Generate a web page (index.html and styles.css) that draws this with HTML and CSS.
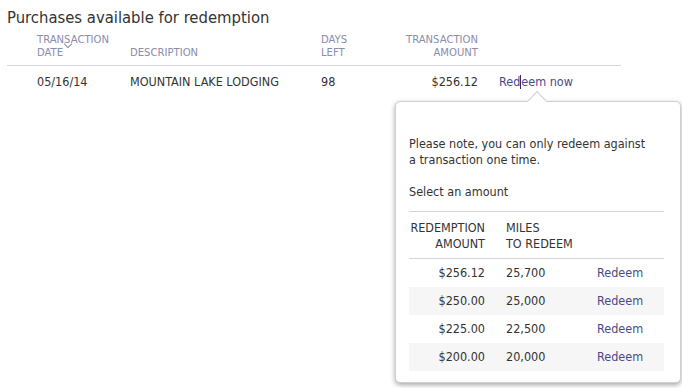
FILE: index.html
```html
<!DOCTYPE html>
<html lang="en">
<head>
  <meta charset="UTF-8" />
  <title>Purchases available for redemption</title>
  <link rel="stylesheet" href="styles.css">
</head>
<body>
  <div class="page">
    <h1>Purchases available for redemption</h1>

    <table class="purchases">
      <thead>
        <tr>
          <th class="col-date">TRANSACTION<br>DATE<span class="sort"></span></th>
          <th class="col-desc">DESCRIPTION</th>
          <th class="col-days">DAYS<br>LEFT</th>
          <th class="col-amount">TRANSACTION<br>AMOUNT</th>
          <th class="col-action"></th>
        </tr>
      </thead>
      <tbody>
        <tr>
          <td class="col-date">05/16/14</td>
          <td class="col-desc">MOUNTAIN LAKE LODGING</td>
          <td class="col-days">98</td>
          <td class="col-amount">$256.12</td>
          <td class="col-action"><a href="#">Red<span class="caret"></span>eem now</a></td>
        </tr>
      </tbody>
    </table>

    <div class="popover">
      <div class="arrow"></div>
      <p class="note">Please note, you can only redeem against a transaction one time.</p>
      <p class="select">Select an amount</p>

      <table class="amounts">
        <thead>
          <tr>
            <th class="amt">REDEMPTION<br>AMOUNT</th>
            <th class="miles">MILES<br>TO REDEEM</th>
            <th></th>
          </tr>
        </thead>
        <tbody>
          <tr>
            <td class="amt">$256.12</td>
            <td class="miles">25,700</td>
            <td class="act"><a href="#">Redeem</a></td>
          </tr>
          <tr>
            <td class="amt">$250.00</td>
            <td class="miles">25,000</td>
            <td class="act"><a href="#">Redeem</a></td>
          </tr>
          <tr>
            <td class="amt">$225.00</td>
            <td class="miles">22,500</td>
            <td class="act"><a href="#">Redeem</a></td>
          </tr>
          <tr>
            <td class="amt">$200.00</td>
            <td class="miles">20,000</td>
            <td class="act"><a href="#">Redeem</a></td>
          </tr>
        </tbody>
      </table>
    </div>
  </div>
</body>
</html>
```

FILE: styles.css
```css
:root {
  --text: #333333;
  --muted: #8c8cab;
  --link: #4b4a86;
  --line: #d4d4de;
  --stripe: #f6f6f7;
}

* {
  box-sizing: border-box;
  margin: 0;
  padding: 0;
}

body {
  background: #ffffff;
  color: var(--text);
  font-family: "DejaVu Sans Condensed", "DejaVu Sans", sans-serif;
  font-stretch: condensed;
  font-size: 12.5px;
}

a {
  color: var(--link);
  text-decoration: none;
}

.page {
  position: relative;
  padding: 7px 7px;
  width: 682px;
  height: 388px;
  overflow: hidden;
}

h1 {
  font-size: 16.5px;
  font-weight: normal;
  line-height: 22px;
  color: #333;
}

.purchases {
  width: 614px;
  border-collapse: collapse;
  margin-top: 4px;
}

.purchases th {
  color: var(--muted);
  font-size: 11.2px;
  font-weight: normal;
  text-align: left;
  vertical-align: bottom;
  line-height: 13px;
  padding: 0 0 6px;
  border-bottom: 1px solid var(--line);
}

.purchases td {
  padding: 0;
  height: 32px;
  vertical-align: middle;
}

.purchases .col-date {
  width: 123px;
  padding-left: 30px;
}

.purchases .col-desc {
  width: 191px;
}

.purchases .col-days {
  width: 60px;
}

.purchases .col-amount {
  width: 97px;
  text-align: right;
}

.purchases .col-action {
  padding-left: 21px;
}

.sort {
  display: inline-block;
  width: 6px;
  height: 6px;
  border-right: 1.5px solid var(--muted);
  border-bottom: 1.5px solid var(--muted);
  transform: rotate(45deg);
  margin-left: 2px;
  position: relative;
  top: -9px;
}

.caret {
  display: inline-block;
  width: 1px;
  height: 14px;
  background: #2b2b70;
  vertical-align: -3px;
}

.popover {
  position: absolute;
  left: 395px;
  top: 101px;
  width: 286px;
  height: 282px;
  background: #fff;
  border: 1px solid #cfcfcf;
  border-radius: 5px;
  box-shadow: 0 2px 5px rgba(0, 0, 0, 0.35);
  padding: 34px 16px 0 13px;
}

.popover .arrow {
  position: absolute;
  top: -8px;
  left: 134px;
  width: 14px;
  height: 14px;
  background: #fff;
  border-left: 1px solid #cfcfcf;
  border-top: 1px solid #cfcfcf;
  transform: rotate(45deg);
}

.note {
  line-height: 16px;
  width: 245px;
}

.select {
  margin-top: 16px;
  line-height: 16px;
}

.amounts {
  width: 255px;
  border-collapse: collapse;
  margin-top: 11px;
  border-top: 1px solid var(--line);
}

.amounts th {
  font-weight: normal;
  text-align: left;
  line-height: 16px;
  padding: 8px 0 6px;
  border-bottom: 1px solid var(--line);
}

.amounts td {
  height: 28px;
  padding: 0;
  vertical-align: middle;
}

.amounts tbody tr:nth-child(even) td {
  background: var(--stripe);
}

.amounts .amt {
  width: 76px;
  text-align: right;
}

.amounts .miles {
  width: 112px;
  padding-left: 21px;
}

.amounts .act {
  text-align: left;
}
```
